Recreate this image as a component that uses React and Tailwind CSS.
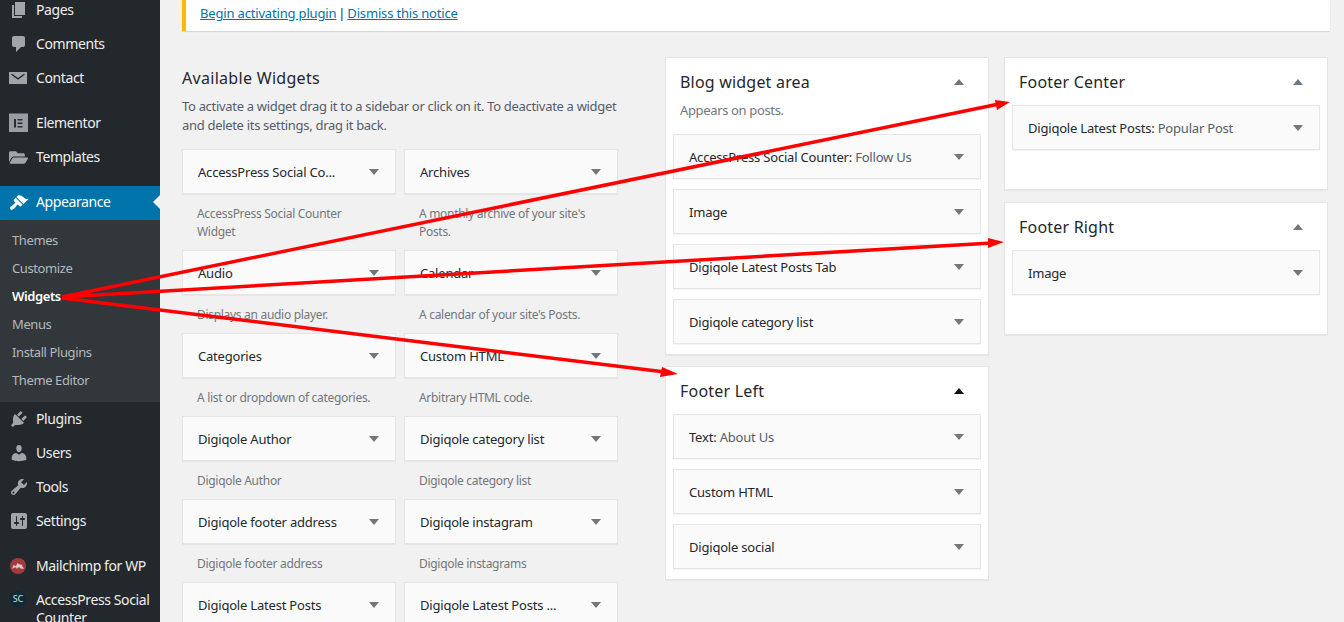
import React from 'react'
import { FaFolderOpen } from 'react-icons/fa'

const Dash = ({ d, className = 'text-[#a0a5aa]' }) => (
  <svg viewBox="0 0 20 20" className={`w-5 h-5 fill-current ${className}`}>
    <path d={d} fillRule="evenodd" />
  </svg>
)

const icons = {
  pages: 'M6 15V2h10v13H6zm-1 1h8v2H3V5h2v11z',
  comments: 'M5 2h9c1.1 0 2 .9 2 2v7c0 1.1-.9 2-2 2h-2l-5 5v-5H5c-1.1 0-2-.9-2-2V4c0-1.1.9-2 2-2z',
  contact: 'M0 4h18v12H0V4zm3 1.800L9 10l6-4.200.8 1L9 11.800 2.200 6.800l.8-1z',
  brush: 'M14.48 11.06L7.41 3.99l1.5-1.5c.5-.56 2.3-.47 3.51.32 1.21.8 1.43 1.28 2.91 2.1 1.18.64 2.45 1.26 4.45.85zm-.71.71L6.7 4.7 4.93 6.47c-.39.39-.39 1.02 0 1.41l1.06 1.06c.39.39.39 1.03 0 1.42-.6.6-1.43 1.11-2.21 1.69-.35.26-.7.53-1.01.84C1.43 13.23.4 14.8 1.4 16.15c1.09 1.47 3.31 0 4.14-.82.31-.31.58-.66.84-1.02.58-.78 1.09-1.61 1.69-2.21.39-.39 1.02-.39 1.41 0l1.06 1.06c.39.39 1.02.39 1.41 0z',
  plugins: 'M13.11 4.36L9.87 7.6 8 5.73l3.24-3.24c.35-.34 1.05-.2 1.56.32.52.51.66 1.21.31 1.55zm-8 1.77l.91-1.12 9.01 9.01-1.19.84c-.71.71-2.63 1.16-3.82 1.16H6.14L4.9 17.26c-.59.59-1.54.59-2.12 0-.59-.58-.59-1.53 0-2.12l1.24-1.24v-3.88c0-1.13.4-3.19 1.09-3.89zm7.26 3.97l3.24-3.24c.34-.35 1.04-.21 1.55.31.52.51.66 1.21.31 1.55l-3.24 3.25z',
  users: 'M10 9.25c-2.27 0-2.73-3.44-2.73-3.44C7 4.02 7.82 2 9.97 2c2.16 0 2.98 2.02 2.71 3.81 0 0-.41 3.44-2.68 3.44zm0 2.57L12.72 10c2.39 0 4.52 2.33 4.52 4.53v2.49s-3.65 1.13-7.24 1.13c-3.65 0-7.24-1.13-7.24-1.13v-2.49c0-2.25 1.94-4.48 4.47-4.48z',
  tools: 'M16.68 9.77c-1.34 1.34-3.3 1.67-4.95.99l-5.41 6.52c-.99.99-2.59.99-3.58 0s-.99-2.59 0-3.57l6.52-5.42c-.68-1.65-.35-3.61.99-4.95 1.28-1.28 3.12-1.62 4.72-1.06l-2.89 2.89 2.82 2.82 2.86-2.87c.53 1.58.18 3.39-1.08 4.65zM3.81 16.21c.4.39 1.04.39 1.43 0 .4-.4.4-1.04 0-1.43-.39-.4-1.03-.4-1.43 0-.39.39-.39 1.03 0 1.43z',
  settings: 'M18 16V4c0-1.1-.9-2-2-2H4c-1.1 0-2 .9-2 2v12c0 1.1.9 2 2 2h12c1.1 0 2-.9 2-2zM8 11h1c.55 0 1 .45 1 1s-.45 1-1 1H8v1.5c0 .28-.22.5-.5.5s-.5-.22-.5-.5V13H6c-.55 0-1-.45-1-1s.45-1 1-1h1V5.5c0-.28.22-.5.5-.5s.5.22.5.5V11zm5-2h-1c-.55 0-1-.45-1-1s.45-1 1-1h1V5.5c0-.28.22-.5.5-.5s.5.22.5.5V7h1c.55 0 1 .45 1 1s-.45 1-1 1h-1v5.5c0 .28-.22.5-.5.5s-.5-.22-.5-.5V9z',
}

const ElementorIcon = () => (
  <svg viewBox="0 0 20 20" className="w-5 h-5">
    <rect x="0" y="0.500" width="19" height="18.500" fill="#9a9ea3" />
    <rect x="5" y="6" width="2" height="8.500" fill="#2a2f33" />
    <rect x="8.500" y="6" width="5" height="1.500" fill="#2a2f33" />
    <rect x="8.500" y="9.500" width="5" height="1.500" fill="#2a2f33" />
    <rect x="8.500" y="13" width="5" height="1.500" fill="#2a2f33" />
  </svg>
)

const MailchimpIcon = () => (
  <svg viewBox="0 0 20 20" className="w-5 h-5">
    <circle cx="9" cy="10" r="8" fill="#a23a40" />
    <path d="M3 13l1.500-4 2.500 1 1.500-3 2 1.500 2 0 2.500 4.500-2-.5-1 .5-1-1.500-2 0-1 1.500-1-1.500-1.500 0z" fill="#e0c8c8" />
  </svg>
)

const MenuItem = ({ icon, label, className = '', labelClass = 'pb-[2px]' }) => (
  <div className={`flex items-center h-[34px] text-[#eee] ${className}`}>
    <span className="w-9 pl-[9px] shrink-0 flex items-center">{icon}</span>
    <span className={labelClass}>{label}</span>
  </div>
)

const Sidebar = () => (
  <aside className="w-40 shrink-0 bg-[#23282d] -mt-[7px] text-[14px] leading-[17px] tracking-[-0.4px]">
    <MenuItem icon={<Dash d={icons.pages} />} label="Pages" />
    <MenuItem icon={<Dash d={icons.comments} />} label="Comments" />
    <MenuItem icon={<Dash d={icons.contact} />} label="Contact" />
    <div className="h-[11px]" />
    <MenuItem icon={<ElementorIcon />} label="Elementor" />
    <MenuItem icon={<FaFolderOpen className="w-[19px] h-[19px] text-[#a0a5aa]" />} label="Templates" />
    <div className="h-3" />
    <div className="relative">
      <MenuItem icon={<Dash d={icons.brush} className="text-white" />} label="Appearance" labelClass="pb-1" className="bg-[#0073aa] text-white" />
      <span className="absolute right-0 top-[9px] border-y-[7px] border-r-[7px] border-y-transparent border-r-[#f1f1f1]" />
    </div>
    <div className="bg-[#32373c] h-[183px] -mt-px pt-[7px] text-[13px] text-[#b4b9be]">
      {['Themes', 'Customize', 'Widgets', 'Menus', 'Install Plugins', 'Theme Editor'].map((s) => (
        <div key={s} className={`h-7 flex items-center pl-3 ${s === 'Widgets' ? 'text-white font-semibold' : ''}`}>{s}</div>
      ))}
    </div>
    <MenuItem icon={<Dash d={icons.plugins} />} label="Plugins" />
    <MenuItem icon={<Dash d={icons.users} />} label="Users" />
    <MenuItem icon={<Dash d={icons.tools} />} label="Tools" />
    <MenuItem icon={<Dash d={icons.settings} />} label="Settings" />
    <div className="h-[11px]" />
    <MenuItem icon={<MailchimpIcon />} label="Mailchimp for WP" />
    <div className="flex text-[#eee] pt-[8px]">
      <span className="w-9 pl-[10px] shrink-0">
        <span className="w-[16px] h-[16px] rounded-full bg-[#0f2a38] text-[9px] leading-[16px] tracking-normal font-medium text-center text-[#c5ccd0] block">SC</span>
      </span>
      <span className="leading-[18px]">AccessPress Social Counter</span>
    </div>
  </aside>
)

const Arrow = () => (
  <svg viewBox="0 0 10 6" className="w-[10px] h-[6px] fill-current text-[#72777c]">
    <polygon points="0,0 10,0 5,6" />
  </svg>
)

const ArrowUp = ({ dark }) => (
  <svg viewBox="0 0 10 6" className={`w-[10px] h-[6px] fill-current ${dark ? 'text-[#111]' : 'text-[#72777c]'}`}>
    <polygon points="0,6 10,6 5,0" />
  </svg>
)

const Widget = ({ title, sub }) => (
  <div className="h-[45px] border border-[#e5e5e5] bg-[#fafafa] shadow-[0_1px_1px_rgba(0,0,0,0.04)] flex items-center justify-between pl-[15px] pr-4 text-[13px] tracking-[-0.2px] text-[#23282d]">
    <span className="pt-[2px]">
      {title}
      {sub && <span className="text-[#555d66]"> {sub}</span>}
    </span>
    <Arrow />
  </div>
)

const available = [
  ['AccessPress Social Co...', 'AccessPress Social Counter Widget'],
  ['Archives', "A monthly archive of your site's Posts."],
  ['Audio', 'Displays an audio player.'],
  ['Calendar', "A calendar of your site's Posts."],
  ['Categories', 'A list or dropdown of categories.'],
  ['Custom HTML', 'Arbitrary HTML code.'],
  ['Digiqole Author', 'Digiqole Author'],
  ['Digiqole category list', 'Digiqole category list'],
  ['Digiqole footer address', 'Digiqole footer address'],
  ['Digiqole instagram', 'Digiqole instagrams'],
  ['Digiqole Latest Posts', ''],
  ['Digiqole Latest Posts ...', ''],
]

const Panel = ({ title, note, dark, className = '', children }) => (
  <section className={`bg-white border border-[#e5e5e5] shadow-[0_1px_1px_rgba(0,0,0,0.04)] px-[7px] ${className}`}>
    <div className="flex items-center justify-between pt-[14px] pl-[7px] pr-[17px]">
      <h3 className="text-[16px] leading-5 tracking-[0.2px] text-[#23282d]">{title}</h3>
      <ArrowUp dark={dark} />
    </div>
    {note && <p className="pl-[7px] mt-[9px] text-[13px] leading-[18px] tracking-[-0.35px] text-[#72777c]">{note}</p>}
    <div className={`flex flex-col gap-[10px] ${note ? 'mt-[15px]' : 'mt-[13px]'}`}>{children}</div>
  </section>
)

const Overlay = () => (
  <svg className="absolute inset-0 pointer-events-none" width="1344" height="622" viewBox="0 0 1344 622">
    <g stroke="#f00" strokeWidth="3.5" fill="none">
      <path d="M62 297L999 104" />
      <path d="M62 297L992 243" />
      <path d="M62 298L665 372" />
    </g>
    <g fill="#f00">
      <polygon points="1010,102 997,110 995,100" />
      <polygon points="1004,242 988,248 988,238" />
      <polygon points="678,374 660,377 662,367" />
    </g>
  </svg>
)

export default function App() {
  return (
    <div className="relative w-[1344px] h-[622px] overflow-hidden bg-[#f1f1f1] flex font-['Noto_Sans',sans-serif]">
      <Sidebar />
      <main className="flex-1 pl-[22px] pr-[14px]">
        <div className="h-[31px] bg-white border-l-4 border-[#ffb900] shadow-[0_1px_1px_rgba(0,0,0,0.1)] pl-[14px] text-[13px] leading-[26px] tracking-[-0.17px] text-[#23282d]">
          <a className="text-[#0073aa] underline">Begin activating plugin</a>
          <span className="mx-[2px]">|</span>
          <a className="text-[#0073aa] underline">Dismiss this notice</a>
        </div>
        <div className="flex mt-[26px]">
          <div className="w-[436px] shrink-0">
            <h3 className="pt-[11px] text-[16px] leading-5 tracking-[0.3px] text-[#23282d]">Available Widgets</h3>
            <p className="mt-[9px] mb-[14px] text-[13px] leading-[19px] tracking-[-0.31px] text-[#555d66]">
              To activate a widget drag it to a sidebar or click on it. To deactivate a widget and delete its settings, drag it back.
            </p>
            <div className="grid grid-cols-2 gap-x-2">
              {available.map(([t, d]) => (
                <div key={t}>
                  <Widget title={t} />
                  <p className="px-[15px] pt-[11px] pb-[9px] text-[12px] leading-[18px] tracking-[-0.3px] text-[#72777c]">{d}</p>
                </div>
              ))}
            </div>
          </div>
          <div className="w-[324px] ml-[47px] shrink-0 flex flex-col gap-[11px] self-start">
            <Panel title="Blog widget area" note="Appears on posts." className="pb-[10px]">
              <Widget title="AccessPress Social Counter:" sub="Follow Us" />
              <Widget title="Image" />
              <Widget title="Digiqole Latest Posts Tab" />
              <Widget title="Digiqole category list" />
            </Panel>
            <Panel title="Footer Left" dark className="pb-[10px]">
              <Widget title="Text:" sub="About Us" />
              <Widget title="Custom HTML" />
              <Widget title="Digiqole social" />
            </Panel>
          </div>
          <div className="w-[324px] ml-[15px] shrink-0 flex flex-col gap-3 self-start">
            <Panel title="Footer Center" className="h-[133px]">
              <Widget title="Digiqole Latest Posts:" sub="Popular Post" />
            </Panel>
            <Panel title="Footer Right" className="h-[133px]">
              <Widget title="Image" />
            </Panel>
          </div>
        </div>
      </main>
      <Overlay />
    </div>
  )
}
